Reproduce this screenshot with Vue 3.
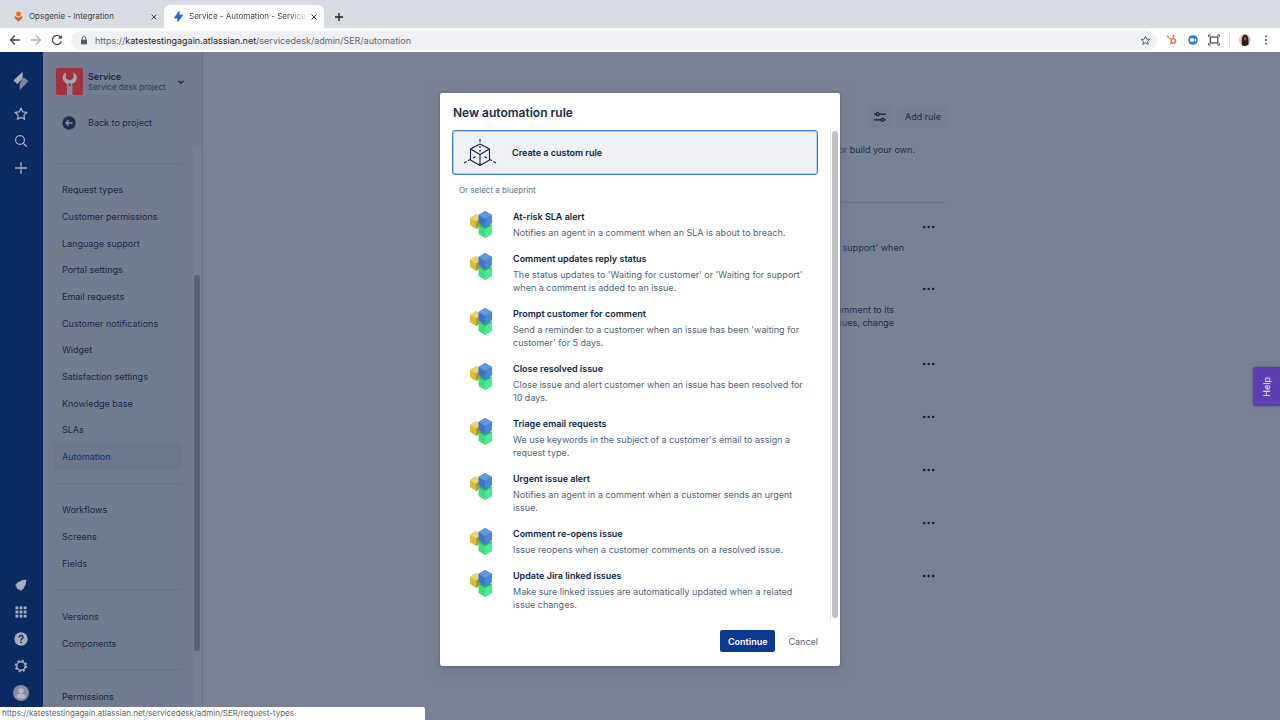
<script setup>
const navItems = [
  '-', 'Request types', 'Customer permissions', 'Language support', 'Portal settings',
  'Email requests', 'Customer notifications', 'Widget', 'Satisfaction settings',
  'Knowledge base', 'SLAs', 'Automation', '-', 'Workflows', 'Screens', 'Fields', '-',
  'Versions', 'Components', '-', 'Permissions',
]

const blueprints = [
  { title: 'At-risk SLA alert', lines: ['Notifies an agent in a comment when an SLA is about to breach.'] },
  { title: 'Comment updates reply status', lines: ["The status updates to 'Waiting for customer' or 'Waiting for support'", 'when a comment is added to an issue.'] },
  { title: 'Prompt customer for comment', lines: ["Send a reminder to a customer when an issue has been 'waiting for", "customer' for 5 days."] },
  { title: 'Close resolved issue', lines: ['Close issue and alert customer when an issue has been resolved for', '10 days.'] },
  { title: 'Triage email requests', lines: ["We use keywords in the subject of a customer's email to assign a", 'request type.'] },
  { title: 'Urgent issue alert', lines: ['Notifies an agent in a comment when a customer sends an urgent', 'issue.'] },
  { title: 'Comment re-opens issue', lines: ['Issue reopens when a customer comments on a resolved issue.'] },
  { title: 'Update Jira linked issues', lines: ['Make sure linked issues are automatically updated when a related', 'issue changes.'] },
]

const rules = [
  { lines: ["support' when"], size: 'medium' },
  { lines: ['comment to its', 'issues, change'], size: 'tall' },
  { lines: [], size: 'short' },
  { lines: [], size: 'short' },
  { lines: [], size: 'short' },
  { lines: [], size: 'short' },
  { lines: [], size: 'short' },
]
</script>

<template>
  <div class="browser">
    <header class="tabs">
      <div class="tab">
        <svg class="favicon" viewBox="0 0 12 12"><circle cx="6" cy="3.2" r="2.7" fill="#e8731c" /><path d="M1.2 6.4 3 5.6Q6 8.4 9 5.6l1.8.8Q9.6 9.6 6 11.6 2.4 9.6 1.2 6.4Z" fill="#d9661b" /></svg>
        <span class="tab-title">Opsgenie - Integration</span>
        <button class="close" aria-label="Close tab"><svg viewBox="0 0 8 8"><path d="m1.5 1.5 5 5m0-5-5 5" /></svg></button>
      </div>
      <div class="tab active">
        <svg class="favicon" viewBox="0 0 12 12"><path d="M6.8.4v4h4L5.2 11.6v-4h-4Z" fill="#2268dd" stroke="#2268dd" stroke-width=".8" stroke-linejoin="round" /></svg>
        <span class="tab-title faded">Service - Automation - Service</span>
        <button class="close" aria-label="Close tab"><svg viewBox="0 0 8 8"><path d="m1.5 1.5 5 5m0-5-5 5" /></svg></button>
      </div>
      <button class="new-tab" aria-label="New tab"><svg viewBox="0 0 10 10"><path d="M5 1v8M1 5h8" /></svg></button>
    </header>

    <div class="toolbar">
      <button class="tool" aria-label="Back"><svg viewBox="0 0 12 12"><path d="M11 6H1.5M6 1.5 1.5 6 6 10.5" stroke="#45484d" /></svg></button>
      <button class="tool" aria-label="Forward"><svg viewBox="0 0 12 12"><path d="M1 6h9.5M6 1.5 10.5 6 6 10.5" stroke="#a9acb1" /></svg></button>
      <button class="tool" aria-label="Reload"><svg viewBox="0 0 12 12"><path d="M10.3 7.2A4.5 4.5 0 1 1 9.2 2.8L10.4 4" stroke="#45484d" /><path d="M10.8 1v3.8H7z" fill="#45484d" /></svg></button>
      <div class="address">
        <svg class="lock" viewBox="0 0 8 9"><path d="M1 3.7h6v4.6H1z" fill="#56595e" /><path d="M2.2 4V2.4a1.8 1.8 0 0 1 3.6 0V4" fill="none" stroke="#56595e" /></svg>
        <span class="url"><span class="scheme">https://</span><b>katestestingagain.atlassian.net</b>/servicedesk/admin/SER/automation</span>
        <svg class="bookmark" viewBox="0 0 12 12"><path d="m6 1.4 1.35 3.1 3.35.3-2.55 2.2.8 3.3L6 8.5l-2.95 1.8.8-3.3L1.3 4.8l3.35-.3Z" fill="none" stroke="#505359" stroke-linejoin="round" /></svg>
      </div>
      <div class="extensions">
        <svg viewBox="0 0 12 12" fill="none" stroke="#e87545"><circle cx="7.4" cy="7" r="2.2" stroke-width="1.5" /><path d="M7.4 4.8V2.2M5.5 5.5 1.8 2.6M5.8 8.6 4 10.3" stroke-width="1.2" /><circle cx="1.8" cy="2.4" r=".8" fill="#e87545" stroke="none" /><circle cx="7.5" cy="1.8" r="1" fill="#e87545" stroke="none" /></svg>
        <svg viewBox="0 0 12 12"><circle cx="6" cy="6" r="4.8" fill="#2c78e8" /><rect x="3.1" y="4.2" width="4" height="3.6" rx=".8" fill="#fff" /><path d="m7.4 5.6 1.7-1.2v3.2L7.4 6.4Z" fill="#fff" /></svg>
        <svg viewBox="0 0 12 12" fill="none" stroke="#2b2f2c"><rect x="2.2" y="3" width="7.6" height="6" stroke-width="1.1" /><path d="M.6 2.8V1h2M9.4 1h2v1.8M.6 9.2V11h2M9.4 11h2V9.2" stroke-width=".9" /></svg>
        <i class="separator"></i>
        <svg viewBox="0 0 12 12"><circle cx="6" cy="6" r="6" fill="#dcc9bf" /><path d="M3 11.2Q2 1 6 .6q4.4.4 3.4 10.2Q6 12.8 3 11.2Z" fill="#2b1b1b" /><path d="M4.8 4.2q1.4-2.6 2.6 0 .2 2-1.2 2.6-1.2-.6-1.4-2.6Z" fill="#8f5f52" /></svg>
        <svg viewBox="0 0 12 12" fill="#45484d"><circle cx="6" cy="2.2" r="1" /><circle cx="6" cy="6" r="1" /><circle cx="6" cy="9.8" r="1" /></svg>
      </div>
    </div>

    <div class="app">
      <nav class="global-nav" aria-label="Global">
        <button class="brand" aria-label="Jira"><svg viewBox="0 0 18 20"><path d="M10.6.8v7L5.2 13 1.5 9.6Z" fill="#a5acbd" /><path d="M10.6 7.8 12 6.6l4.4 3.6-8.7 9v-6.8Z" fill="#7884a4" /></svg></button>
        <button aria-label="Starred"><svg viewBox="0 0 14 14"><path d="m7 1.2 1.8 3.7 4 .6-2.9 2.8.7 4L7 10.4l-3.6 1.9.7-4L1.2 5.5l4-.6Z" class="line" /></svg></button>
        <button aria-label="Search"><svg viewBox="0 0 14 14"><circle cx="6" cy="6" r="4.4" class="line" /><path d="m9.3 9.3 3.5 3.5" class="line" /></svg></button>
        <button aria-label="Create"><svg viewBox="0 0 14 14"><path d="M7 1v12M1 7h12" class="line" /></svg></button>
        <span class="grow"></span>
        <button aria-label="Notifications"><svg viewBox="0 0 14 14"><path d="M12.4 1.6 8 2.2 3.6 4.4 1 7.6l1.8.7-.6 1.2 2.3 2.3 1.2-.6.7 1.8 3.2-2.6L11.8 6Z" fill="#a5acbd" /></svg></button>
        <button aria-label="Apps"><svg viewBox="0 0 14 14" fill="#a5acbd"><path d="M1.5 1.5h2.8v2.8H1.5zm4.1 0h2.8v2.8H5.6zm4.1 0h2.8v2.8H9.7zM1.5 5.6h2.8v2.8H1.5zm4.1 0h2.8v2.8H5.6zm4.1 0h2.8v2.8H9.7zM1.5 9.7h2.8v2.8H1.5zm4.1 0h2.8v2.8H5.6zm4.1 0h2.8v2.8H9.7z" /></svg></button>
        <button aria-label="Help menu"><svg viewBox="0 0 14 14"><circle cx="7" cy="7" r="6.7" fill="#a5acbd" /><path d="M4.9 5.4Q5 3.5 7 3.5t2.1 1.7Q9.1 6.3 8 6.8q-1 .5-1 1.6" fill="none" stroke="#0a2a62" stroke-width="1.3" /><circle cx="7" cy="10.3" r=".9" fill="#0a2a62" /></svg></button>
        <button aria-label="Settings"><svg viewBox="0 0 14 14" fill="none" stroke="#a5acbd"><circle cx="7" cy="7" r="4.2" stroke-width="1.5" /><circle cx="7" cy="7" r="5.4" stroke-width="1.7" stroke-dasharray="2.12" /></svg></button>
        <button aria-label="Profile"><svg class="profile" viewBox="0 0 16 16"><circle cx="8" cy="8" r="8" fill="#858c9d" /><circle cx="8" cy="5.8" r="2.6" fill="#b5bac6" /><path d="M3.7 12.5V11q0-2 2-2h4.6q2 0 2 2v1.5Q8 15 3.7 12.5Z" fill="#b5bac6" /></svg></button>
      </nav>

      <aside class="sidebar">
        <div class="project">
          <svg class="project-icon" viewBox="0 0 27 27"><rect width="27" height="27" rx="2" fill="#a2323f" /><path d="M9.8 4.6q-3.4 2-3.1 5.8.4 3.3 4.5 5.4V27h5V15.8q4.2-2 4.5-5.4.3-3.8-3.2-5.8v5.6l-3.8 2.4-3.9-2.4Z" fill="#a0a8b5" /><path d="M11.2 16.5h5V27h-5z" fill="#7f8b9d" /><circle cx="13.7" cy="16.5" r="1.5" fill="#51637f" /></svg>
          <div class="project-text"><strong>Service</strong><span>Service desk project</span></div>
          <button class="chevron" aria-label="Switch project"><svg viewBox="0 0 8 8"><path d="m1.5 2.8 2.5 2.4 2.5-2.4" fill="none" stroke="#1c2b4b" stroke-width="1.4" /></svg></button>
        </div>
        <a class="back" href="#">
          <svg viewBox="0 0 14 14"><circle cx="7" cy="7" r="6.7" fill="#1f2e4e" /><path d="M10.5 7H4.2M6.7 4.3 4 7l2.7 2.7" fill="none" stroke="#8a92a5" stroke-width="1.4" /></svg>
          <span>Back to project</span>
        </a>
        <div class="menu-area">
          <ul class="menu">
            <li v-for="(item, i) in navItems" :key="i">
              <hr v-if="item === '-'" />
              <a v-else href="#" :class="{ selected: item === 'Automation' }">{{ item }}</a>
            </li>
          </ul>
          <div class="menu-scroll"><i></i></div>
        </div>
      </aside>

      <main class="content">
        <div class="actions">
          <button class="shade" aria-label="Filter"><svg viewBox="0 0 14 12"><path d="M1 3.2h2M6.4 3.2H13M1 8.8h6.8M11.2 8.8H13" class="slider" /><circle cx="4.7" cy="3.2" r="1.5" class="slider" /><circle cx="9.5" cy="8.8" r="1.5" class="slider" /></svg></button>
          <button class="shade">Add rule</button>
        </div>
        <p class="intro">or build your own.</p>
        <ul class="rules">
          <li v-for="(rule, i) in rules" :key="i" :class="rule.size">
            <button aria-label="Rule actions"><svg viewBox="0 0 14 4"><circle cx="2.2" cy="2" r="1.3" /><circle cx="6.7" cy="2" r="1.3" /><circle cx="11.2" cy="2" r="1.3" /></svg></button>
            <p v-for="line in rule.lines" :key="line">{{ line }}</p>
          </li>
        </ul>
      </main>

      <button class="help">Help</button>

      <div class="overlay">
        <section class="dialog" role="dialog" aria-labelledby="dialog-title">
          <h1 id="dialog-title">New automation rule</h1>
          <div class="dialog-body">
            <div class="choices">
              <button class="custom">
                <svg viewBox="0 0 34 30" fill="none" stroke="#14213d" stroke-width="1.1" stroke-linejoin="round"><path d="M17 6 26.5 11v11L17 27.5 7.500 22V11Zm0 10.500L26.500 11M17 16.500 7.500 11M17 16.500v11" /><path d="M17 1v3M17 8v2M17 12v2M1 25l2.500-1.400M5 22.700l2-1.100M10 20l2.500-1.500M33 25l-2.500-1.400M29 22.700l-2-1.100M24 20l-2.500-1.500" /></svg>
                <span>Create a custom rule</span>
              </button>
              <p class="hint">Or select a blueprint</p>
              <ul class="blueprints">
                <li v-for="b in blueprints" :key="b.title">
                  <svg class="cubes" viewBox="0 0 22 27">
                    <path d="m0 7 6-4 6 4v7l-6 4-6-4Z" fill="#d9bd38" /><path d="m0 7 6-4 6 4-6 3.500Z" fill="#e6d66d" /><path d="m6 10.500 6-3.500v7l-6 4Z" fill="#b39a2a" />
                    <path d="m8.500 14 6.500-2 7 2v9l-7 4-6.500-4Z" fill="#3fdc83" /><path d="m15 18 7-4v9l-7 4Z" fill="#4fe895" /><path d="m8.500 14 6.500-2 7 2-7 4Z" fill="#2fae70" />
                    <path d="m8.500 4 6.500-4 7 4v8l-7 4-6.500-4Z" fill="#3975ca" /><path d="m8.500 4 6.500-4 7 4-7 4Z" fill="#6298de" /><path d="m15 8 7-4v8l-7 4Z" fill="#4b85d4" />
                  </svg>
                  <div>
                    <h2>{{ b.title }}</h2>
                    <p><template v-for="(line, n) in b.lines" :key="n"><br v-if="n" />{{ line }}</template></p>
                  </div>
                </li>
              </ul>
            </div>
            <div class="dialog-scroll"><i></i></div>
          </div>
          <footer>
            <button class="primary">Continue</button>
            <button class="plain">Cancel</button>
          </footer>
        </section>
      </div>
    </div>

    <div class="status">https://katestestingagain.atlassian.net/servicedesk/admin/SER/request-types</div>
  </div>
</template>

<style>
body { margin: 0; }
</style>

<style scoped>
.browser { position: relative; display: flex; flex-direction: column; height: 100vh; overflow: hidden; font: 9px/13px Inter, "Liberation Sans", sans-serif; color: #172b4d; }
.browser *, .browser { box-sizing: border-box; }
button { border: 0; padding: 0; margin: 0; background: none; font: inherit; color: inherit; display: flex; align-items: center; justify-content: center; }
svg { display: block; flex: none; }
a { color: inherit; text-decoration: none; }
ul { list-style: none; margin: 0; padding: 0; }
p, h1, h2 { margin: 0; }

.tabs { display: flex; align-items: flex-end; height: 28px; background: #d9dce3; padding-left: 4px; font-size: 8px; color: #3c4043; }
.tab { display: flex; align-items: center; width: 160px; height: 23px; padding: 0 4px 0 9px; }
.tab.active { background: #fff; border-radius: 6px 6px 0 0; }
.favicon { width: 11px; height: 11px; margin-right: 5px; }
.tab-title { flex: 1; min-width: 0; white-space: nowrap; }
.faded { mask-image: linear-gradient(90deg, #000 85%, transparent); }
.close { width: 12px; height: 12px; }
.close svg { width: 8px; height: 8px; fill: none; stroke: #45484d; }
.new-tab { width: 20px; height: 23px; margin-left: 5px; }
.new-tab svg { width: 10px; height: 10px; stroke: #202124; stroke-width: 1.4; }

.toolbar { display: flex; align-items: center; height: 24px; background: #fff; padding: 0 8px; }
.tool { width: 13px; margin-right: 8px; }
.tool svg { width: 12px; height: 12px; fill: none; stroke-width: 1.3; }
.address { flex: 1; display: flex; align-items: center; height: 19px; border-radius: 10px; background: #f0f1f4; padding: 0 6px 0 9px; }
.lock { width: 8px; height: 9px; margin-right: 7px; }
.url { flex: 1; color: #63666b; }
.url b { font-weight: 400; color: #202124; }
.bookmark { width: 11px; height: 11px; }
.extensions { display: flex; align-items: center; gap: 9px; padding-left: 9px; }
.extensions svg { width: 12px; height: 12px; }
.separator { width: 1px; height: 12px; background: #dadce0; }

.app { position: relative; flex: 1; min-height: 0; display: flex; background: #7a8194; }
.global-nav { display: flex; flex-direction: column; align-items: center; width: 43px; background: #0a2a62; padding: 15px 1px 14px 0; }
.global-nav button { width: 27px; height: 27px; }
.global-nav svg { width: 14px; height: 14px; }
.global-nav .brand { margin-bottom: 6px; }
.global-nav .brand svg { width: 18px; height: 20px; }
.global-nav .profile { width: 16px; height: 16px; }
.line { fill: none; stroke: #a5acbd; stroke-width: 1.3; stroke-linejoin: round; }
.grow { flex: 1; }

.sidebar { display: flex; flex-direction: column; width: 160px; background: #737b90; border-right: 1px solid #697187; color: #172748; }
.project { display: flex; align-items: center; padding: 16px 17px 0 13px; }
.project-icon { width: 27px; height: 27px; margin-right: 5px; }
.project-text { flex: 1; display: flex; flex-direction: column; line-height: 10px; }
.project-text strong { font-size: 9px; font-weight: 600; }
.project-text span { font-size: 8px; color: #2a3959; }
.chevron svg { width: 8px; height: 8px; }
.back { display: flex; align-items: center; gap: 12px; height: 27px; margin: 14px 0 11px 19px; }
.back svg { width: 14px; height: 14px; }
.menu-area { flex: 1; min-height: 0; display: flex; }
.menu { flex: 1; display: grid; grid-auto-rows: 1fr; padding: 2px 12px 10px 11px; border-top: 1px solid #6f778b; }
.menu li { display: flex; align-items: center; }
.menu a { flex: 1; display: flex; align-items: center; align-self: stretch; padding-left: 8px; border-radius: 2px; }
.menu .selected { background: #6f778c; color: #0c3281; }
.menu hr { flex: 1; height: 1px; border: 0; margin: 0 0 0 1px; background: #6a7287; }
.menu-scroll { width: 9px; background: #777f93; padding: 128px 2px 69px 1px; }
.menu-scroll i { display: block; height: 100%; border-radius: 3px; background: #5b6277; }

.content { flex: 1; padding: 54px 334px 0 0; color: #1d2c4c; }
.actions { display: flex; justify-content: flex-end; gap: 5px; margin-right: -3px; }
.shade { height: 21px; padding: 0 8px; border-radius: 2px; background: #767e92; }
.shade:first-child { padding: 0 5px; }
.shade svg { width: 14px; height: 12px; }
.slider { fill: none; stroke: #14213f; stroke-width: 1.3; }
.intro { max-width: 400px; margin-left: auto; text-align: right; padding: 16px 31px 46px 0; border-bottom: 1px solid #6a7186; }
.rules li { text-align: right; padding: 17px 52px 0 0; height: 53px; }
.rules .medium { height: 62px; padding-right: 42px; }
.rules .tall { height: 75px; }
.rules button { width: 14px; height: 13px; margin: 0 -42px 8px auto; }
.rules .medium button { margin-right: -32px; }
.rules svg { width: 14px; height: 4px; fill: #131f3d; }

.help { position: absolute; right: 0; top: 315px; width: 27px; height: 39px; border-radius: 2px 0 0 2px; background: #5b3fb3; color: #eeeaf8; writing-mode: sideways-lr; box-shadow: 0 0 3px #555b70; }

.overlay { position: absolute; inset: 0; display: flex; justify-content: center; align-items: flex-start; padding-top: 41px; pointer-events: none; }
.dialog { width: 400px; background: #fff; border-radius: 2px; box-shadow: 0 0 2px #505970, 0 4px 12px #6b7389; pointer-events: auto; }
.dialog h1 { font-size: 12px; line-height: 16px; font-weight: 600; padding: 12px 13px 7px; color: #172b4d; }
.dialog-body { display: flex; }
.choices { flex: 1; padding: 2px 12px 4px; }
.custom { width: 100%; height: 45px; justify-content: flex-start; gap: 15px; padding-left: 10px; border: 1px solid #3f7bd0; box-shadow: inset 0 0 0 1px #b4cdf0; border-radius: 3px; background: #f0f1f5; color: #091e42; font-weight: 600; }
.custom svg { width: 34px; height: 30px; }
.hint { font-size: 8px; padding: 9px 7px 6px; color: #5e6c84; }
.blueprints li { display: flex; gap: 21px; padding: 6px 0 6px 18px; }
.cubes { width: 22px; height: 27px; margin-top: 2px; }
.blueprints h2 { font-size: 9px; line-height: 16px; font-weight: 600; margin-bottom: 1px; color: #091e42; }
.blueprints p { color: #505f79; white-space: nowrap; }
.dialog-scroll { width: 10px; border-left: 1px solid #e4e4e4; padding: 3px 2px 3px 1px; }
.dialog-scroll i { display: block; height: 100%; border-radius: 3px; background: #c1c1c1; }
.dialog footer { display: flex; justify-content: flex-end; align-items: center; gap: 5px; padding: 9px 14px 14px; }
.dialog footer button { height: 22px; padding: 0 8px; border-radius: 2px; }
.dialog footer .primary { background: #0b3a92; color: #fff; font-weight: 600; }
.plain { color: #505f79; }

.status { position: absolute; left: 0; bottom: 0; width: 425px; height: 13px; padding-left: 2px; background: #fff; border-radius: 0 2px 0 0; font-size: 8px; color: #5c5f64; }
</style>
